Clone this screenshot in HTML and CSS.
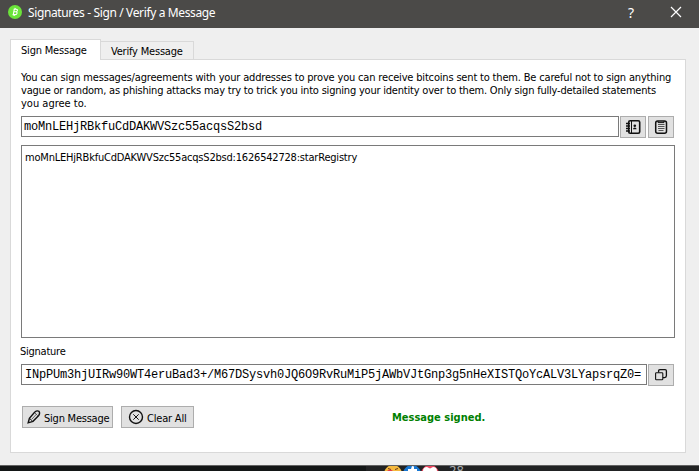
FILE: index.html
```
<!DOCTYPE html>
<html lang="en">
<head>
<meta charset="utf-8">
<title>Signatures - Sign / Verify a Message</title>
<link rel="stylesheet" href="styles.css">
</head>
<body>
<header class="titlebar">
  <svg class="logo" width="14" height="14" viewBox="0 0 14 14"><circle cx="7" cy="7" r="7" fill="#6be43a"/><path d="M5.6 4.2h2.6q1.4.2 1.2 1.3-.2 1.2-1.4 1.3 1.3.2 1 1.5-.3 1.3-1.7 1.3H4.6M6.3 4.2 5.3 9.6M5.9 6.8h2M7.2 2.9 7 4M6.3 9.8l-.2 1.2" fill="none" stroke="#fff" stroke-width="1.1"/></svg>
  <h1 class="title">Signatures - Sign / Verify a Message</h1>
  <span class="help">?</span>
  <svg class="close" width="12" height="12" viewBox="0 0 12 12"><path d="M1 1l10 10M11 1 1 11" stroke="#fff" stroke-width="1.2"/></svg>
</header>
<main class="dialog">
  <nav class="tabs">
    <div class="tab active"><span class="t-tab1">Sign Message</span></div>
    <div class="tab"><span class="t-tab2">Verify Message</span></div>
  </nav>
  <section class="panel">
    <p class="intro">
      <span class="l1">You can sign messages/agreements with your addresses to prove you can receive bitcoins sent to them. Be careful not to sign anything</span>
      <span class="l2">vague or random, as phishing attacks may try to trick you into signing your identity over to them. Only sign fully-detailed statements</span>
      <span class="l3">you agree to.</span>
    </p>
    <div class="row">
      <div class="field mono address">moMnLEHjRBkfuCdDAKWVSzc55acqsS2bsd</div>
      <div class="btn tool"><svg width="16" height="16" viewBox="0 0 16 16" fill="none" stroke="#111"><rect x="3.7" y="1.7" width="11" height="12.6" rx="1.5" stroke-width="1.6"/><path d="M6.5 2v12" stroke-width="1"/><path d="M1 4.5h4M1 7h4M1 9.5h4M1 12h4" stroke-width="1.3"/><circle cx="9.8" cy="6.7" r="1.3" fill="#111" stroke="none"/><path d="M8 10.3q0-1.8 1.8-1.8t1.8 1.8z" fill="#111" stroke="none"/></svg></div>
      <div class="btn tool"><svg width="16" height="16" viewBox="0 0 16 16" fill="none" stroke="#111"><rect x="2.7" y="1.9" width="10.8" height="12.4" rx="2" stroke-width="1.5"/><path d="M5 2v1.6h6V2" stroke-width="1"/><path d="M5 5.5h6.5M5 7.5h6.5M5 9.5h6.5M5.5 11.5h5" stroke="#555" stroke-width="1"/></svg></div>
    </div>
    <div class="field message"><span class="t-msg">moMnLEHjRBkfuCdDAKWVSzc55acqsS2bsd:1626542728:starRegistry</span></div>
    <div class="label"><span class="t-sig">Signature</span></div>
    <div class="row">
      <div class="field mono signature">INpPUm3hjUIRw90WT4eruBad3+/M67DSysvh0JQ6O9RvRuMiP5jAWbVJtGnp3g5nHeXISTQoYcALV3LYapsrqZ0=</div>
      <div class="btn tool"><svg width="14" height="14" viewBox="0 0 14 14" fill="none" stroke="#111" stroke-width="1.3"><path d="M4.6 4.5V3q0-1.3 1.3-1.3h5.3q1.2 0 1.2 1.2v4.9q0 1.8-1.8 1.8H8.9"/><rect x="1.6" y="4.7" width="7.2" height="7" rx=".8" stroke-width="1.1"/></svg></div>
    </div>
    <footer class="actions">
      <div class="btn sign"><svg width="14" height="14" viewBox="0 0 14 14" fill="none" stroke="#111" stroke-width="1.4"><path d="M1.2 12.8 2.4 8.4 7.6 2.2Q10 .2 12 1.3q1.3 1.8-.3 4.2L6 11.3z"/><path d="M2.8 8.6l2.8 2.6" stroke-width="1"/><path d="M4.8 9.2 9.8 3.8M8 3l2.8 2.8" stroke="#555" stroke-width=".9"/></svg><span class="t-sign">Sign Message</span></div>
      <div class="btn clear"><svg width="16" height="16" viewBox="0 0 16 16" fill="none" stroke="#111"><circle cx="8" cy="8" r="6.5" stroke-width="1.4"/><path d="M5.3 5.3l5.4 5.4M10.7 5.3l-5.4 5.4" stroke-width="1"/></svg><span class="t-clear">Clear All</span></div>
      <strong class="status">Message signed.</strong>
    </footer>
  </section>
</main>
<div class="behind">
  <div class="behind-post">
    <svg width="56" height="5" viewBox="0 0 56 5"><circle cx="9" cy="8" r="9" fill="#f5b93e"/><path d="M4 2.5l3 1M11 3.5l3-1" stroke="#6b3c18"/><path d="M3 5q3-3 6 0z" fill="#e33c45"/><circle cx="28" cy="8" r="9" fill="#1877d2"/><path d="M24 5V3h3l1-3 2 .5V3h3v2z" fill="#fff"/><circle cx="46" cy="8" r="9" fill="#ed4660"/><path d="M39 5q0-4 4-4l3 1.5L49 1q4 0 4 4z" fill="#fff"/></svg>
    <span class="count">28</span>
  </div>
</div>
</body>
</html>
```
FILE: styles.css
```
* { box-sizing: border-box; }
body {
  margin: 0;
  width: 699px;
  height: 471px;
  overflow: hidden;
  display: flex;
  flex-direction: column;
  background: #efefef;
  color: #000;
  font: 11px/13px "DejaVu Sans Condensed", "DejaVu Sans", sans-serif;
  font-stretch: condensed;
  letter-spacing: -.2px;
  white-space: nowrap;
}
svg { display: block; flex: none; }
.titlebar {
  height: 28px;
  flex: none;
  display: flex;
  align-items: center;
  padding: 0 17px 4px 8px;
  background: #4b4a48;
  color: #fff;
  font-family: "Noto Sans", sans-serif;
}
.title { margin: 2px 0 0 6px; font-size: 12px; font-weight: 400; line-height: 16px; letter-spacing: -.37px; flex: 1; }
.help { font-size: 14px; margin-right: 36px; }
.dialog { height: 437px; flex: none; padding: 11px 13px 12px 10px; display: flex; flex-direction: column; }
.tabs { display: flex; align-items: flex-end; height: 20px; position: relative; flex: none; }
.tab { height: 18px; border: 1px solid #d9d9d9; border-left: 0; border-bottom: 0; padding: 3px 0 0 10px; width: 93px; }
.tab.active { height: 21px; width: 91px; background: #fff; border-left: 1px solid #d9d9d9; margin-bottom: -1px; padding: 4px 0 0 10px; }
.panel { flex: 1; background: #fff; border: 1px solid #d9d9d9; padding: 11px 10px 0; }
.intro { margin: 0 0 6px; height: 39px; }
.intro span { display: block; }
.l1 { letter-spacing: -.173px; }
.l2 { letter-spacing: -.207px; }
.l3 { letter-spacing: 0; }
.row { display: flex; gap: 2px; align-items: flex-start; }
.field { border: 1px solid #7a7a7a; background: #fff; height: 21px; }
.mono { font: 12px/20px "Liberation Mono", monospace; padding-left: 2px; }
.address { width: 598px; margin-right: -1px; }
.signature { width: 626px; margin-right: -1px; padding-left: 3px; }
.btn { display: flex; align-items: center; border: 1px solid #adadad; background: #e1e1e1; height: 22px; }
.tool { width: 26px; justify-content: center; }
.message { width: 654px; height: 193px; margin-top: 7px; padding: 5px 3px; }
.label { margin: 7px 0 6px -1px; letter-spacing: -.25px; }
.actions { display: flex; align-items: center; margin: 20px 0 0 1px; }
.sign { width: 91px; padding-left: 4px; gap: 3px; letter-spacing: -.23px; }
.sign span, .clear span { margin-top: 2px; }
.clear { width: 73px; margin-left: 8px; padding-left: 6px; gap: 3px; }
.status { margin-left: 198px; color: #008000; letter-spacing: 0; }
.behind { height: 6px; flex: none; border-top: 1px solid #626262; background: #131616; padding-left: 366px; overflow: hidden; }
.behind-post { height: 5px; display: flex; padding-left: 18px; background: #212223; }
.count { color: #a9abad; font: 13px/15px "Noto Sans", sans-serif; letter-spacing: 0; margin: -3px 0 0 9px; }
```
